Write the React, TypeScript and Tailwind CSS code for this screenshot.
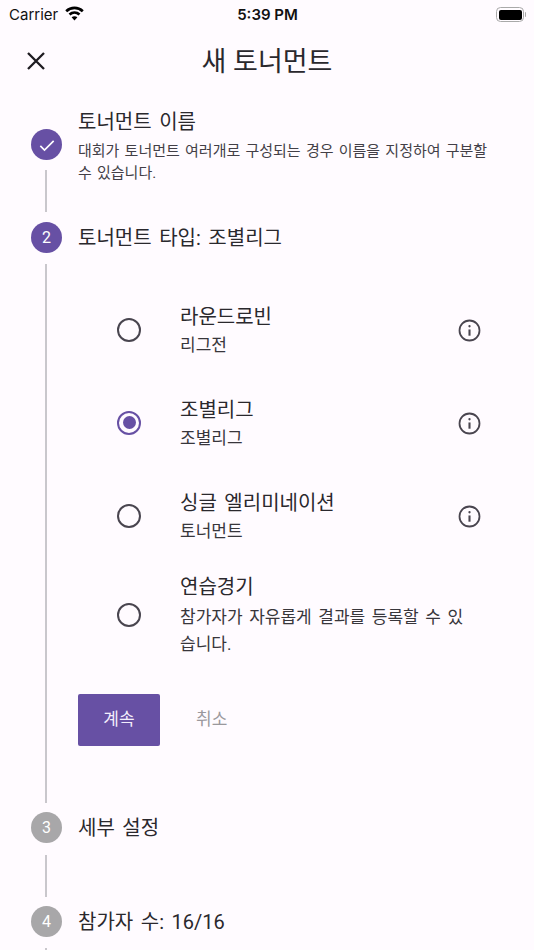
function StepLine({ className }: { className: string }) {
  return <div className={"ml-[45px] w-[2px] bg-[#c9c7cc] " + className} />;
}

function StepCircle({ children, active }: { children: React.ReactNode; active?: boolean }) {
  return (
    <div
      className={
        "flex h-[31px] w-[31px] shrink-0 items-center justify-center rounded-full text-[16px] text-white " +
        (active ? "bg-[#6750a4]" : "bg-[#a8a7a9]")
      }
    >
      {children}
    </div>
  );
}

function InfoIcon() {
  return (
    <svg width="25" height="25" viewBox="0 0 24 24" fill="none" stroke="#49454f" strokeWidth="1.7">
      <circle cx="12" cy="12" r="9.6" />
      <path d="M12 11v6" strokeWidth="2" />
      <circle cx="12" cy="7.9" r="1.1" fill="#49454f" stroke="none" />
    </svg>
  );
}

function Option({
  title,
  sub,
  selected,
  className,
}: {
  title: string;
  sub: string;
  selected?: boolean;
  className: string;
}) {
  return (
    <div className={"flex items-center " + className}>
      <div className="flex w-[102px] shrink-0 justify-center">
        {selected ? (
          <div className="flex h-[24px] w-[24px] items-center justify-center rounded-full border-[2.5px] border-[#6750a4]">
            <div className="h-[13px] w-[13px] rounded-full bg-[#6750a4]" />
          </div>
        ) : (
          <div className="h-[24px] w-[24px] rounded-full border-[2.5px] border-[#49454f]" />
        )}
      </div>
      <div className="w-[286px] shrink-0 pt-[3px]">
        <div className="text-[20px] leading-[28px] [word-spacing:0.13em] text-[#2a282d]">{title}</div>
        <div className="mt-[1px] text-[17px] leading-[27px] text-[#38363b]">{sub}</div>
      </div>
      <div className="ml-[-10px] flex w-[26px] justify-center pt-[1px]">
        <InfoIcon />
      </div>
    </div>
  );
}

export default function App() {
  return (
    <div
      className="h-[950px] w-[534px] overflow-hidden bg-[#fffbff] text-[#2a282d]"
      style={{ fontFamily: 'Roboto, "Noto Sans CJK KR", sans-serif' }}
    >
      {/* Status bar */}
      <div className="flex h-[28px] items-center justify-between pl-[9px] pr-[8px] pt-[1px]">
        <div className="flex w-[150px] items-center gap-[7px]">
          <span className="font-['Inter'] text-[15px] leading-[28px] text-[#111]">Carrier</span>
          <svg width="19" height="15" viewBox="0 0 19 15" className="mb-[3px]" fill="none" stroke="#000" strokeWidth="2.7">
            <path d="M1.200 5.200C5.900 .8 13.100 .8 17.800 5.200" />
            <path d="M4.500 8.500C7.400 5.900 11.600 5.900 14.500 8.500" />
            <path d="M9.500 14.600L6.600 11.300C8.300 10 10.700 10 12.400 11.300Z" fill="#000" stroke="none" />
          </svg>
        </div>
        <span className="font-['Inter'] text-[15px] font-semibold leading-[28px] text-[#111]">5:39 PM</span>
        <div className="flex w-[150px] items-center justify-end">
          <div className="flex h-[15px] w-[28px] items-center rounded-[4.5px] border-[1.5px] border-[#a9a9a9] p-[1.5px]">
            <div className="h-full w-full rounded-[2px] bg-black" />
          </div>
          <div className="ml-[0.5px] h-[5px] w-[1.5px] rounded-r-[1px] bg-[#a9a9a9]" />
        </div>
      </div>

      {/* Header */}
      <div className="flex h-[66px] items-center">
        <div className="flex w-[72px] justify-center">
          <svg width="20" height="20" viewBox="0 0 20 20" stroke="#1d1b20" strokeWidth="2.3" fill="none">
            <path d="M2 2l16 16M18 2L2 18" />
          </svg>
        </div>
        <div className="w-[390px] pt-[2px] text-center text-[27px] leading-[36px]">새 토너먼트</div>
      </div>

      {/* Step 1 */}
      <div className="mt-[14px] flex">
        <div className="flex w-[78px] shrink-0 justify-start pl-[31px] pt-[21px]">
          <StepCircle active>
            <svg width="20" height="20" viewBox="0 0 24 24" fill="none" stroke="#fff" strokeWidth="2">
              <path d="M4 13l5 5L20 7" />
            </svg>
          </StepCircle>
        </div>
        <div className="w-[412px]">
          <div className="text-[20px] leading-[28px] [word-spacing:0.13em]">토너먼트 이름</div>
          <div className="mt-[4px] text-[15px] leading-[22px] [word-spacing:0.1em] text-[#433f47]">
            대회가 토너먼트 여러개로 구성되는 경우 이름을 지정하여 구분할 수 있습니다.
          </div>
        </div>
      </div>
      <StepLine className="mt-[-14px] h-[42px]" />

      {/* Step 2 */}
      <div className="mt-[10px] flex items-center">
        <div className="w-[78px] shrink-0 pl-[31px]">
          <StepCircle active>2</StepCircle>
        </div>
        <div className="text-[20px] leading-[28px] [word-spacing:0.13em]">토너먼트 타입: 조별리그</div>
      </div>

      <div className="relative mt-[11px] h-[539px]">
        <div className="absolute bottom-0 left-[45px] top-0 w-[2px] bg-[#c9c7cc]" />
        <div className="ml-[78px] flex flex-col pt-[38px]">
          <Option title="라운드로빈" sub="리그전" className="h-[55px]" />
          <Option title="조별리그" sub="조별리그" selected className="mt-[38px] h-[55px]" />
          <Option title="싱글 엘리미네이션" sub="토너먼트" className="mt-[38px] h-[55px]" />
          <div className="mt-[29px] flex items-center">
            <div className="flex w-[102px] shrink-0 justify-center">
              <div className="h-[24px] w-[24px] rounded-full border-[2.5px] border-[#49454f]" />
            </div>
            <div className="w-[290px] pt-[1px]">
              <div className="text-[20px] leading-[28px]">연습경기</div>
              <div className="mt-[3px] text-[17px] leading-[27px] [word-spacing:0.14em] text-[#38363b]">
                참가자가 자유롭게 결과를 등록할 수 있습니다.
              </div>
            </div>
          </div>
          <div className="mt-[36px] flex items-center">
            <button className="h-[52px] w-[82px] rounded-[2px] bg-[#6750a4] text-[17px] text-[#f3eefc]">계속</button>
            <span className="ml-[36px] text-[17px] text-[#9a989c]">취소</span>
          </div>
        </div>
      </div>

      {/* Step 3 */}
      <div className="mt-[9px] flex items-center">
        <div className="w-[78px] shrink-0 pl-[31px]">
          <StepCircle>3</StepCircle>
        </div>
        <div className="text-[20px] leading-[28px] [word-spacing:0.13em]">세부 설정</div>
      </div>
      <StepLine className="mt-[12px] h-[42px]" />

      {/* Step 4 */}
      <div className="mt-[9px] flex items-center">
        <div className="w-[78px] shrink-0 pl-[31px]">
          <StepCircle>4</StepCircle>
        </div>
        <div className="text-[20px] leading-[28px] [word-spacing:0.13em]">참가자 수: 16/16</div>
      </div>
      <StepLine className="mt-[11px] h-[10px]" />
    </div>
  );
}
